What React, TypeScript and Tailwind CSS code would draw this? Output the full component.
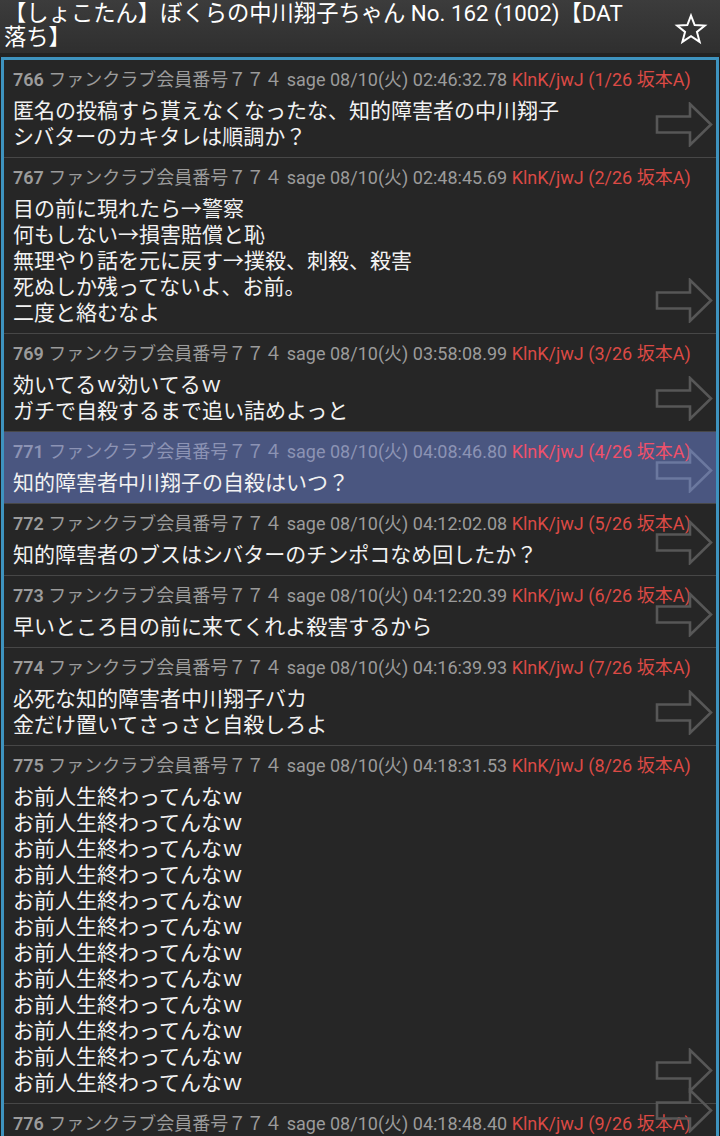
import React from "react";

type Post = {
  no: number;
  time: string;
  count: string;
  lines: string[];
  active?: boolean;
};

const posts: Post[] = [
  {
    no: 766,
    time: "02:46:32.78",
    count: "1",
    lines: ["匿名の投稿すら貰えなくなったな、知的障害者の中川翔子", "シバターのカキタレは順調か？"],
  },
  {
    no: 767,
    time: "02:48:45.69",
    count: "2",
    lines: ["目の前に現れたら→警察", "何もしない→損害賠償と恥", "無理やり話を元に戻す→撲殺、刺殺、殺害", "死ぬしか残ってないよ、お前。", "二度と絡むなよ"],
  },
  {
    no: 769,
    time: "03:58:08.99",
    count: "3",
    lines: ["効いてるｗ効いてるｗ", "ガチで自殺するまで追い詰めよっと"],
  },
  {
    no: 771,
    time: "04:08:46.80",
    count: "4",
    lines: ["知的障害者中川翔子の自殺はいつ？"],
    active: true,
  },
  {
    no: 772,
    time: "04:12:02.08",
    count: "5",
    lines: ["知的障害者のブスはシバターのチンポコなめ回したか？"],
  },
  {
    no: 773,
    time: "04:12:20.39",
    count: "6",
    lines: ["早いところ目の前に来てくれよ殺害するから"],
  },
  {
    no: 774,
    time: "04:16:39.93",
    count: "7",
    lines: ["必死な知的障害者中川翔子バカ", "金だけ置いてさっさと自殺しろよ"],
  },
  {
    no: 775,
    time: "04:18:31.53",
    count: "8",
    lines: Array.from({ length: 12 }, () => "お前人生終わってんなｗ"),
  },
  {
    no: 776,
    time: "04:18:48.40",
    count: "9",
    lines: [],
  },
];

function Arrow({ active }: { active?: boolean }) {
  return (
    <svg
      width="58"
      height="45"
      viewBox="0 0 58 45"
      className="pointer-events-none absolute bottom-[10px] right-[3px]"
      fill="none"
    >
      <path
        d="M2 14.5 H35 V2 L56 22.5 L35 43 V30.5 H2 Z"
        stroke={active ? "#6b789f" : "#575757"}
        strokeWidth="2.6"
        strokeLinejoin="miter"
      />
    </svg>
  );
}

function PostItem({ post }: { post: Post }) {
  return (
    <div
      className={
        "relative border-b border-[#474747] pb-[7px] pl-[9px] pr-2 pt-2 " +
        (post.active ? "bg-[#4a5680]" : "bg-[#262626]")
      }
    >
      <div
        className={
          "h-6 whitespace-nowrap text-[18px] leading-6 " +
          (post.active ? "text-[#8c93b4]" : "text-[#9b9b9b]")
        }
      >
        <span className="font-semibold">{post.no}</span>{" "}
        ファンクラブ会員番号７７４ sage 08/10(火) {post.time}{" "}
        <span className={post.active ? "text-[#f0506a]" : "text-[#db4a45]"}>
          KlnK/jwJ ({post.count}/26 坂本A)
        </span>
      </div>
      {post.lines.length > 0 && (
        <div className="mt-[6px] text-[21px] leading-[26px] text-[#f2f2f2]">
          {post.lines.map((line, i) => (
            <div key={i}>{line}</div>
          ))}
        </div>
      )}
      <Arrow active={post.active} />
    </div>
  );
}

export default function App() {
  return (
    <div
      className="h-[1136px] w-[720px] overflow-hidden bg-[#1d1d1d]"
      style={{ fontFamily: 'Roboto, "Noto Sans CJK JP", sans-serif' }}
    >
      <header className="flex h-[53px] items-start justify-between bg-gradient-to-b from-[#3c3c3c] to-[#2f2f2f] pl-[4px] pr-[12px]">
        <h1 className="pt-[1px] text-[22.3px] leading-[24px] text-white">
          【しょこたん】ぼくらの中川翔子ちゃん No. 162 (1002)【DAT
          <br />
          落ち】
        </h1>
        <svg width="34" height="34" viewBox="0 0 24 24" className="mt-[12px]" fill="none">
          <path
            d="M12 2.5 L14.6 9.2 L21.8 9.6 L16.2 14.1 L18.1 21.1 L12 17.1 L5.9 21.1 L7.8 14.1 L2.2 9.6 L9.4 9.2 Z"
            stroke="#ffffff"
            strokeWidth="1.4"
            strokeLinejoin="miter"
          />
        </svg>
      </header>
      <div className="h-[4px] bg-[#232323]" />
      <main className="mx-[1px] border-x-[3px] border-t-[3px] border-[#3e93bf] bg-[#262626]">
        {posts.map((p) => (
          <PostItem key={p.no} post={p} />
        ))}
      </main>
    </div>
  );
}
